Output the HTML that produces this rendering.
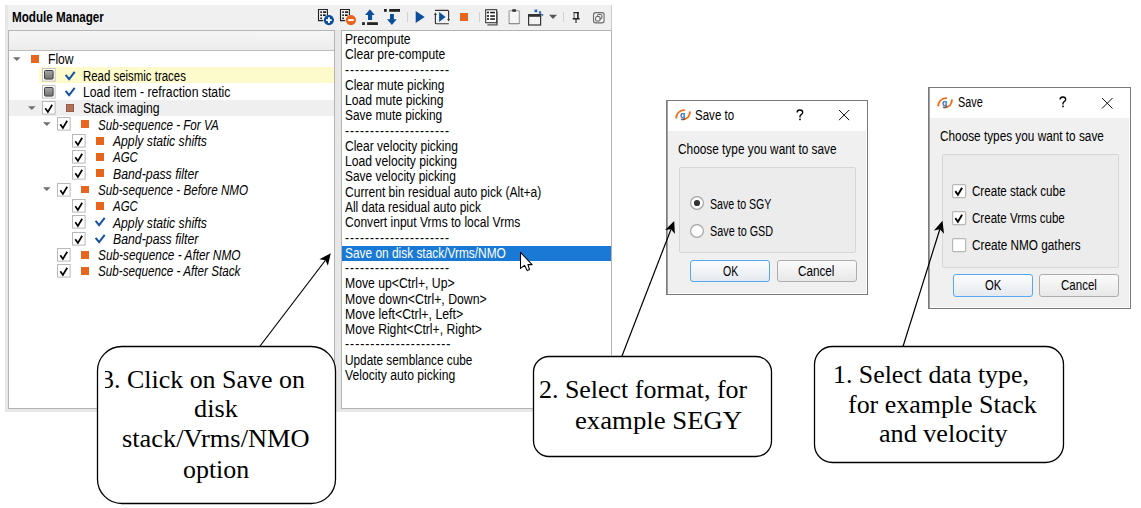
<!DOCTYPE html>
<html><head><meta charset="utf-8"><style>
html,body{margin:0;padding:0;}
body{width:1141px;height:508px;position:relative;overflow:hidden;background:#fff;font-family:'Liberation Sans', sans-serif;}
.t{position:absolute;white-space:nowrap;}
svg{overflow:visible;}
</style></head><body>
<div style="position:absolute;left:5.00px;top:5.00px;width:607.00px;height:407.00px;background:#f0f0f0;"></div>
<div style="position:absolute;left:5.00px;top:5.00px;width:3.00px;height:407.00px;background:#e7e7e7;"></div>
<div style="position:absolute;left:5.00px;top:409.00px;width:606.00px;height:3.00px;background:#e7e7e7;"></div>
<div style="position:absolute;left:335.00px;top:30.00px;width:6.00px;height:382.00px;background:#e7e7e7;"></div>
<div style="position:absolute;left:611.00px;top:5.00px;width:1.00px;height:407.00px;background:#c8c8c8;"></div>
<div class="t" style="left:11.75px;top:11px;font-size:13.8px;line-height:13.8px;color:#000;font-weight:bold;font-style:normal;font-family:'Liberation Sans', sans-serif;letter-spacing:0px;transform:scaleX(0.8441);transform-origin:0 0;">Module Manager</div>
<svg style="position:absolute;left:316.00px;top:7.00px;" width="20" height="20" viewBox="0 0 20 20"><path d="M11.4 8.2V2.5H2.5V13.6H7.2" fill="none" stroke="#222" stroke-width="1.1"/><rect x="4.3" y="4.3" width="1.6" height="1.6" fill="#111"/><rect x="7" y="4.3" width="3.1" height="1.6" fill="#111"/><rect x="4.3" y="7.4" width="1.6" height="1.6" fill="#111"/><rect x="7" y="7.4" width="2.6" height="1.6" fill="#111"/><rect x="4.3" y="10.5" width="1.6" height="1.6" fill="#111"/><circle cx="12.9" cy="13.1" r="5.1" fill="#0b4f9c"/><path d="M12.9 10.3v5.6M10.1 13.1h5.6" stroke="#fff" stroke-width="1.9"/></svg>
<svg style="position:absolute;left:338.00px;top:7.00px;" width="20" height="20" viewBox="0 0 20 20"><path d="M11.4 8.2V2.5H2.5V13.6H7.2" fill="none" stroke="#222" stroke-width="1.1"/><rect x="4.3" y="4.3" width="1.6" height="1.6" fill="#111"/><rect x="7" y="4.3" width="3.1" height="1.6" fill="#111"/><rect x="4.3" y="7.4" width="1.6" height="1.6" fill="#111"/><rect x="7" y="7.4" width="2.6" height="1.6" fill="#111"/><rect x="4.3" y="10.5" width="1.6" height="1.6" fill="#111"/><circle cx="12.9" cy="13.1" r="5.1" fill="#e8641c"/><path d="M10.1 13.1h5.6" stroke="#fff" stroke-width="1.9"/></svg>
<svg style="position:absolute;left:360.00px;top:7.00px;" width="20" height="20" viewBox="0 0 20 20"><path d="M9.9 2.2L5.1 7.9H8V12.9H12.1V7.9H14.7z" fill="#0b4f9c"/><rect x="2.1" y="15.2" width="2.8" height="2.8" fill="#222"/><rect x="7.1" y="15.2" width="10.8" height="2.8" fill="#222"/></svg>
<svg style="position:absolute;left:382.00px;top:7.00px;" width="20" height="20" viewBox="0 0 20 20"><rect x="2" y="2" width="2.8" height="2.8" fill="#222"/><rect x="7.2" y="2" width="10.8" height="2.8" fill="#222"/><path d="M9.9 18L5 12.2H8V7H11.9V12.2H14.7z" fill="#0b4f9c"/></svg>
<div style="position:absolute;left:406.50px;top:12.30px;width:1.00px;height:10.00px;background:#d0d0d0;"></div>
<svg style="position:absolute;left:414.00px;top:9.00px;" width="14" height="16" viewBox="0 0 14 16"><path d="M1.7 2v12.1l9-6.05z" fill="#0b4f9c"/></svg>
<svg style="position:absolute;left:433.00px;top:8.00px;" width="20" height="20" viewBox="0 0 20 20"><path d="M2 2.3H14.6Q15.6 2.3 15.6 3.3V11.8" fill="none" stroke="#333" stroke-width="1.15"/><path d="M14.2 11L17 11L15.6 13.6z" fill="#333"/><path d="M2.4 6.5V14.7Q2.4 15.7 3.4 15.7H15.8" fill="none" stroke="#333" stroke-width="1.15"/><path d="M1 7L3.8 7L2.4 4.3z" fill="#333"/><path d="M6.1 4.1V14L12.6 9.05z" fill="#0b4f9c"/></svg>
<div style="position:absolute;left:460.10px;top:13.20px;width:8.00px;height:8.00px;background:#e8641c;"></div>
<div style="position:absolute;left:478.50px;top:12.30px;width:1.00px;height:10.00px;background:#d0d0d0;"></div>
<svg style="position:absolute;left:484.00px;top:8.00px;" width="18" height="18" viewBox="0 0 18 18"><path d="M13 3.6V16.8H3.4" fill="none" stroke="#555" stroke-width="1.3"/><rect x="1.7" y="1.7" width="11" height="13" fill="#fff" stroke="#333" stroke-width="1.1"/><rect x="3.1" y="3.6" width="1.8" height="1.8" fill="#111"/><rect x="6.2" y="3.8" width="4.7" height="1.5" fill="#111"/><rect x="3.1" y="7.1" width="1.8" height="1.8" fill="#111"/><rect x="6.2" y="7.3" width="4.7" height="1.5" fill="#111"/><rect x="3.1" y="10.1" width="1.8" height="1.8" fill="#111"/><rect x="6.2" y="10.3" width="4.7" height="1.5" fill="#111"/></svg>
<svg style="position:absolute;left:507.00px;top:8.00px;" width="14" height="18" viewBox="0 0 14 18"><path d="M2.1 15.1V3.6Q2.1 2.6 3.1 2.6H11.4Q12.4 2.6 12.4 3.6V15.1" fill="#f5f5f5" stroke="#a8a8a8" stroke-width="1.3"/><path d="M2.1 15.1Q2.1 15.7 3 15.7H11.5Q12.4 15.7 12.4 15.1" fill="none" stroke="#707070" stroke-width="1.1"/><rect x="5.3" y="1.2" width="3.6" height="2.6" fill="#333"/></svg>
<svg style="position:absolute;left:526.00px;top:8.00px;" width="20" height="19" viewBox="0 0 20 19"><rect x="2.6" y="6.6" width="12" height="10.4" fill="#f3f3f3" stroke="#333" stroke-width="1.2"/><rect x="2" y="6" width="13.2" height="2.8" fill="#333"/><path d="M8.6 1.6l2.6 2.6M11.2 1.6l-2.6 2.6M13 3.5l2 2M15 3.5l-2 2M15.6 6l1.5 1.5" stroke="#1f5fb8" stroke-width="1.1"/><rect x="9.3" y="2.3" width="1.2" height="1.2" fill="#0b4f9c"/></svg>
<svg style="position:absolute;left:548.00px;top:13.00px;" width="10" height="7" viewBox="0 0 10 7"><path d="M1 1.8h8l-4 4.2z" fill="#555"/></svg>
<div style="position:absolute;left:562.50px;top:12.40px;width:1.00px;height:9.50px;background:#d0d0d0;"></div>
<svg style="position:absolute;left:571.00px;top:10.00px;" width="12" height="15" viewBox="0 0 12 15"><path d="M2.4 2.6H7.8" stroke="#222" stroke-width="1.2"/><path d="M3.1 2.2V8.6" stroke="#555" stroke-width="1"/><path d="M6.9 2.2V8.6" stroke="#111" stroke-width="1.5"/><path d="M1.7 8.8H8.6" stroke="#111" stroke-width="1.4"/><path d="M5 9V12.9" stroke="#333" stroke-width="1.2"/></svg>
<svg style="position:absolute;left:592.00px;top:11.00px;" width="14" height="13" viewBox="0 0 14 13"><rect x="1.5" y="1.6" width="10.6" height="10.3" rx="2.2" fill="none" stroke="#6a6a6a" stroke-width="1.1"/><rect x="5.4" y="3.5" width="4.4" height="4.4" rx="1" fill="none" stroke="#555" stroke-width="1"/><rect x="3.6" y="5.6" width="4.4" height="4.4" rx="1" fill="#f4f4f4" stroke="#555" stroke-width="1"/></svg>
<div style="position:absolute;left:8.00px;top:30.00px;width:327.00px;height:379.00px;background:#fff;border:1px solid #b4b4b4;box-sizing:border-box;"></div>
<div style="position:absolute;left:9.00px;top:31.00px;width:325.00px;height:20.00px;background:linear-gradient(#f6f6f6,#ececec);border-bottom:1px solid #bdbdbd;box-sizing:border-box;"></div>
<div style="position:absolute;left:39.00px;top:67.01px;width:295.00px;height:16.20px;background:#fdfacb;"></div>
<div style="position:absolute;left:9.00px;top:99.83px;width:325.00px;height:15.80px;background:#efefef;"></div>
<svg style="position:absolute;left:12.80px;top:56.90px;" width="8" height="5" viewBox="0 0 8 5"><path d="M0 0.2h7.6l-3.8 3.9z" fill="#6e6e6e"/></svg>
<div style="position:absolute;left:30.70px;top:55.20px;width:8.00px;height:7.80px;background:#e8651d;"></div>
<div class="t" style="left:48.40px;top:53px;font-size:13.8px;line-height:13.8px;color:#000;font-weight:normal;font-style:normal;font-family:'Liberation Sans', sans-serif;letter-spacing:0px;transform:scaleX(0.8769);transform-origin:0 0;">Flow</div>
<svg style="position:absolute;left:42.00px;top:68.41px;" width="14" height="14" viewBox="0 0 14 14"><defs><linearGradient id="gg" x1="0" y1="0" x2="0" y2="1"><stop offset="0" stop-color="#a8a8a8"/><stop offset="1" stop-color="#707070"/></linearGradient></defs><rect x="0.5" y="0.5" width="12.6" height="12.6" fill="#fff" stroke="#c4c4c4" stroke-width="1"/><rect x="2.5" y="2.5" width="8.6" height="8.6" rx="1" fill="url(#gg)" stroke="#404040" stroke-width="1"/></svg>
<svg style="position:absolute;left:64.80px;top:70.61px;" width="11" height="10" viewBox="0 0 11 10"><path d="M0.6 3.9l3.5 4.3l5.6-7.3" fill="none" stroke="#1552a3" stroke-width="2"/></svg>
<div class="t" style="left:83.40px;top:70px;font-size:13.8px;line-height:13.8px;color:#000;font-weight:normal;font-style:normal;font-family:'Liberation Sans', sans-serif;letter-spacing:0px;transform:scaleX(0.8282);transform-origin:0 0;">Read seismic traces</div>
<svg style="position:absolute;left:42.00px;top:84.72px;" width="14" height="14" viewBox="0 0 14 14"><defs><linearGradient id="gg" x1="0" y1="0" x2="0" y2="1"><stop offset="0" stop-color="#a8a8a8"/><stop offset="1" stop-color="#707070"/></linearGradient></defs><rect x="0.5" y="0.5" width="12.6" height="12.6" fill="#fff" stroke="#c4c4c4" stroke-width="1"/><rect x="2.5" y="2.5" width="8.6" height="8.6" rx="1" fill="url(#gg)" stroke="#404040" stroke-width="1"/></svg>
<svg style="position:absolute;left:64.80px;top:86.92px;" width="11" height="10" viewBox="0 0 11 10"><path d="M0.6 3.9l3.5 4.3l5.6-7.3" fill="none" stroke="#1552a3" stroke-width="2"/></svg>
<div class="t" style="left:83.40px;top:86px;font-size:13.8px;line-height:13.8px;color:#000;font-weight:normal;font-style:normal;font-family:'Liberation Sans', sans-serif;letter-spacing:0px;transform:scaleX(0.8855);transform-origin:0 0;">Load item - refraction static</div>
<svg style="position:absolute;left:27.80px;top:105.83px;" width="8" height="5" viewBox="0 0 8 5"><path d="M0 0.2h7.6l-3.8 3.9z" fill="#6e6e6e"/></svg>
<svg style="position:absolute;left:42.00px;top:101.03px;" width="14" height="14" viewBox="0 0 14 14"><rect x="0.5" y="0.5" width="12.6" height="12.6" fill="#fff" stroke="#b8b8b8" stroke-width="1"/><path d="M3.3 7.2l2.6 3.8l4.3-7.3" fill="none" stroke="#000" stroke-width="1.7" stroke-linejoin="miter"/></svg>
<div style="position:absolute;left:66.00px;top:104.03px;width:8.00px;height:7.60px;background:#b0705a;box-shadow:inset 0 0 0 0.6px #8a5040;"></div>
<div class="t" style="left:83.40px;top:102px;font-size:13.8px;line-height:13.8px;color:#000;font-weight:normal;font-style:normal;font-family:'Liberation Sans', sans-serif;letter-spacing:0px;transform:scaleX(0.8821);transform-origin:0 0;">Stack imaging</div>
<svg style="position:absolute;left:42.90px;top:122.14px;" width="8" height="5" viewBox="0 0 8 5"><path d="M0 0.2h7.6l-3.8 3.9z" fill="#6e6e6e"/></svg>
<svg style="position:absolute;left:57.10px;top:117.34px;" width="14" height="14" viewBox="0 0 14 14"><rect x="0.5" y="0.5" width="12.6" height="12.6" fill="#fff" stroke="#b8b8b8" stroke-width="1"/><path d="M3.3 7.2l2.6 3.8l4.3-7.3" fill="none" stroke="#000" stroke-width="1.7" stroke-linejoin="miter"/></svg>
<div style="position:absolute;left:81.10px;top:120.44px;width:8.00px;height:7.80px;background:#e8651d;"></div>
<div class="t" style="left:97.90px;top:119px;font-size:13.8px;line-height:13.8px;color:#000;font-weight:normal;font-style:italic;font-family:'Liberation Sans', sans-serif;letter-spacing:0px;transform:scaleX(0.8423);transform-origin:0 0;">Sub-sequence - For VA</div>
<svg style="position:absolute;left:72.20px;top:133.65px;" width="14" height="14" viewBox="0 0 14 14"><rect x="0.5" y="0.5" width="12.6" height="12.6" fill="#fff" stroke="#b8b8b8" stroke-width="1"/><path d="M3.3 7.2l2.6 3.8l4.3-7.3" fill="none" stroke="#000" stroke-width="1.7" stroke-linejoin="miter"/></svg>
<div style="position:absolute;left:96.20px;top:136.75px;width:8.00px;height:7.80px;background:#e8651d;"></div>
<div class="t" style="left:113.00px;top:135px;font-size:13.8px;line-height:13.8px;color:#000;font-weight:normal;font-style:italic;font-family:'Liberation Sans', sans-serif;letter-spacing:0px;transform:scaleX(0.8814);transform-origin:0 0;">Apply static shifts</div>
<svg style="position:absolute;left:72.20px;top:149.96px;" width="14" height="14" viewBox="0 0 14 14"><rect x="0.5" y="0.5" width="12.6" height="12.6" fill="#fff" stroke="#b8b8b8" stroke-width="1"/><path d="M3.3 7.2l2.6 3.8l4.3-7.3" fill="none" stroke="#000" stroke-width="1.7" stroke-linejoin="miter"/></svg>
<div style="position:absolute;left:96.20px;top:153.06px;width:8.00px;height:7.80px;background:#e8651d;"></div>
<div class="t" style="left:113.00px;top:151px;font-size:13.8px;line-height:13.8px;color:#000;font-weight:normal;font-style:italic;font-family:'Liberation Sans', sans-serif;letter-spacing:0px;transform:scaleX(0.8289);transform-origin:0 0;">AGC</div>
<svg style="position:absolute;left:72.20px;top:166.27px;" width="14" height="14" viewBox="0 0 14 14"><rect x="0.5" y="0.5" width="12.6" height="12.6" fill="#fff" stroke="#b8b8b8" stroke-width="1"/><path d="M3.3 7.2l2.6 3.8l4.3-7.3" fill="none" stroke="#000" stroke-width="1.7" stroke-linejoin="miter"/></svg>
<div style="position:absolute;left:96.20px;top:169.37px;width:8.00px;height:7.80px;background:#e8651d;"></div>
<div class="t" style="left:113.00px;top:168px;font-size:13.8px;line-height:13.8px;color:#000;font-weight:normal;font-style:italic;font-family:'Liberation Sans', sans-serif;letter-spacing:0px;transform:scaleX(0.8907);transform-origin:0 0;">Band-pass filter</div>
<svg style="position:absolute;left:42.90px;top:187.38px;" width="8" height="5" viewBox="0 0 8 5"><path d="M0 0.2h7.6l-3.8 3.9z" fill="#6e6e6e"/></svg>
<svg style="position:absolute;left:57.10px;top:182.58px;" width="14" height="14" viewBox="0 0 14 14"><rect x="0.5" y="0.5" width="12.6" height="12.6" fill="#fff" stroke="#b8b8b8" stroke-width="1"/><path d="M3.3 7.2l2.6 3.8l4.3-7.3" fill="none" stroke="#000" stroke-width="1.7" stroke-linejoin="miter"/></svg>
<div style="position:absolute;left:81.10px;top:185.68px;width:8.00px;height:7.80px;background:#e8651d;"></div>
<div class="t" style="left:97.90px;top:184px;font-size:13.8px;line-height:13.8px;color:#000;font-weight:normal;font-style:italic;font-family:'Liberation Sans', sans-serif;letter-spacing:0px;transform:scaleX(0.8437);transform-origin:0 0;">Sub-sequence - Before NMO</div>
<svg style="position:absolute;left:72.20px;top:198.89px;" width="14" height="14" viewBox="0 0 14 14"><rect x="0.5" y="0.5" width="12.6" height="12.6" fill="#fff" stroke="#b8b8b8" stroke-width="1"/><path d="M3.3 7.2l2.6 3.8l4.3-7.3" fill="none" stroke="#000" stroke-width="1.7" stroke-linejoin="miter"/></svg>
<div style="position:absolute;left:96.20px;top:201.99px;width:8.00px;height:7.80px;background:#e8651d;"></div>
<div class="t" style="left:113.00px;top:200px;font-size:13.8px;line-height:13.8px;color:#000;font-weight:normal;font-style:italic;font-family:'Liberation Sans', sans-serif;letter-spacing:0px;transform:scaleX(0.8289);transform-origin:0 0;">AGC</div>
<svg style="position:absolute;left:72.20px;top:215.20px;" width="14" height="14" viewBox="0 0 14 14"><rect x="0.5" y="0.5" width="12.6" height="12.6" fill="#fff" stroke="#b8b8b8" stroke-width="1"/><path d="M3.3 7.2l2.6 3.8l4.3-7.3" fill="none" stroke="#000" stroke-width="1.7" stroke-linejoin="miter"/></svg>
<svg style="position:absolute;left:95.00px;top:217.40px;" width="11" height="10" viewBox="0 0 11 10"><path d="M0.6 3.9l3.5 4.3l5.6-7.3" fill="none" stroke="#1552a3" stroke-width="2"/></svg>
<div class="t" style="left:113.00px;top:217px;font-size:13.8px;line-height:13.8px;color:#000;font-weight:normal;font-style:italic;font-family:'Liberation Sans', sans-serif;letter-spacing:0px;transform:scaleX(0.8814);transform-origin:0 0;">Apply static shifts</div>
<svg style="position:absolute;left:72.20px;top:231.51px;" width="14" height="14" viewBox="0 0 14 14"><rect x="0.5" y="0.5" width="12.6" height="12.6" fill="#fff" stroke="#b8b8b8" stroke-width="1"/><path d="M3.3 7.2l2.6 3.8l4.3-7.3" fill="none" stroke="#000" stroke-width="1.7" stroke-linejoin="miter"/></svg>
<svg style="position:absolute;left:95.00px;top:233.71px;" width="11" height="10" viewBox="0 0 11 10"><path d="M0.6 3.9l3.5 4.3l5.6-7.3" fill="none" stroke="#1552a3" stroke-width="2"/></svg>
<div class="t" style="left:113.00px;top:233px;font-size:13.8px;line-height:13.8px;color:#000;font-weight:normal;font-style:italic;font-family:'Liberation Sans', sans-serif;letter-spacing:0px;transform:scaleX(0.8907);transform-origin:0 0;">Band-pass filter</div>
<svg style="position:absolute;left:57.10px;top:247.82px;" width="14" height="14" viewBox="0 0 14 14"><rect x="0.5" y="0.5" width="12.6" height="12.6" fill="#fff" stroke="#b8b8b8" stroke-width="1"/><path d="M3.3 7.2l2.6 3.8l4.3-7.3" fill="none" stroke="#000" stroke-width="1.7" stroke-linejoin="miter"/></svg>
<div style="position:absolute;left:81.10px;top:250.92px;width:8.00px;height:7.80px;background:#e8651d;"></div>
<div class="t" style="left:97.90px;top:249px;font-size:13.8px;line-height:13.8px;color:#000;font-weight:normal;font-style:italic;font-family:'Liberation Sans', sans-serif;letter-spacing:0px;transform:scaleX(0.8589);transform-origin:0 0;">Sub-sequence - After NMO</div>
<svg style="position:absolute;left:57.10px;top:264.13px;" width="14" height="14" viewBox="0 0 14 14"><rect x="0.5" y="0.5" width="12.6" height="12.6" fill="#fff" stroke="#b8b8b8" stroke-width="1"/><path d="M3.3 7.2l2.6 3.8l4.3-7.3" fill="none" stroke="#000" stroke-width="1.7" stroke-linejoin="miter"/></svg>
<div style="position:absolute;left:81.10px;top:267.23px;width:8.00px;height:7.80px;background:#e8651d;"></div>
<div class="t" style="left:97.90px;top:265px;font-size:13.8px;line-height:13.8px;color:#000;font-weight:normal;font-style:italic;font-family:'Liberation Sans', sans-serif;letter-spacing:0px;transform:scaleX(0.8469);transform-origin:0 0;">Sub-sequence - After Stack</div>
<div style="position:absolute;left:341.00px;top:30.00px;width:271.00px;height:379.00px;background:#fff;border:1px solid #b4b4b4;box-sizing:border-box;"></div>
<div class="t" style="left:345.00px;top:33px;font-size:13.8px;line-height:13.8px;color:#000;font-weight:normal;font-style:normal;font-family:'Liberation Sans', sans-serif;letter-spacing:0px;transform:scaleX(0.8818);transform-origin:0 0;">Precompute</div>
<div class="t" style="left:345.00px;top:48px;font-size:13.8px;line-height:13.8px;color:#000;font-weight:normal;font-style:normal;font-family:'Liberation Sans', sans-serif;letter-spacing:0px;transform:scaleX(0.8773);transform-origin:0 0;">Clear pre-compute</div>
<div class="t" style="left:345.00px;top:64px;font-size:13.8px;line-height:13.8px;color:#000;font-weight:normal;font-style:normal;font-family:'Liberation Sans', sans-serif;letter-spacing:1.15px;transform:scaleX(0.8695);transform-origin:0 0;">---------------------</div>
<div class="t" style="left:345.00px;top:79px;font-size:13.8px;line-height:13.8px;color:#000;font-weight:normal;font-style:normal;font-family:'Liberation Sans', sans-serif;letter-spacing:0px;transform:scaleX(0.8706);transform-origin:0 0;">Clear mute picking</div>
<div class="t" style="left:345.00px;top:94px;font-size:13.8px;line-height:13.8px;color:#000;font-weight:normal;font-style:normal;font-family:'Liberation Sans', sans-serif;letter-spacing:0px;transform:scaleX(0.8801);transform-origin:0 0;">Load mute picking</div>
<div class="t" style="left:345.00px;top:109px;font-size:13.8px;line-height:13.8px;color:#000;font-weight:normal;font-style:normal;font-family:'Liberation Sans', sans-serif;letter-spacing:0px;transform:scaleX(0.8619);transform-origin:0 0;">Save mute picking</div>
<div class="t" style="left:345.00px;top:125px;font-size:13.8px;line-height:13.8px;color:#000;font-weight:normal;font-style:normal;font-family:'Liberation Sans', sans-serif;letter-spacing:1.15px;transform:scaleX(0.8695);transform-origin:0 0;">---------------------</div>
<div class="t" style="left:345.00px;top:140px;font-size:13.8px;line-height:13.8px;color:#000;font-weight:normal;font-style:normal;font-family:'Liberation Sans', sans-serif;letter-spacing:0px;transform:scaleX(0.8712);transform-origin:0 0;">Clear velocity picking</div>
<div class="t" style="left:345.00px;top:155px;font-size:13.8px;line-height:13.8px;color:#000;font-weight:normal;font-style:normal;font-family:'Liberation Sans', sans-serif;letter-spacing:0px;transform:scaleX(0.8795);transform-origin:0 0;">Load velocity picking</div>
<div class="t" style="left:345.00px;top:170px;font-size:13.8px;line-height:13.8px;color:#000;font-weight:normal;font-style:normal;font-family:'Liberation Sans', sans-serif;letter-spacing:0px;transform:scaleX(0.8650);transform-origin:0 0;">Save velocity picking</div>
<div class="t" style="left:345.00px;top:186px;font-size:13.8px;line-height:13.8px;color:#000;font-weight:normal;font-style:normal;font-family:'Liberation Sans', sans-serif;letter-spacing:0px;transform:scaleX(0.8752);transform-origin:0 0;">Current bin residual auto pick (Alt+a)</div>
<div class="t" style="left:345.00px;top:201px;font-size:13.8px;line-height:13.8px;color:#000;font-weight:normal;font-style:normal;font-family:'Liberation Sans', sans-serif;letter-spacing:0px;transform:scaleX(0.8646);transform-origin:0 0;">All data residual auto pick</div>
<div class="t" style="left:345.00px;top:216px;font-size:13.8px;line-height:13.8px;color:#000;font-weight:normal;font-style:normal;font-family:'Liberation Sans', sans-serif;letter-spacing:0px;transform:scaleX(0.8733);transform-origin:0 0;">Convert input Vrms to local Vrms</div>
<div class="t" style="left:345.00px;top:232px;font-size:13.8px;line-height:13.8px;color:#000;font-weight:normal;font-style:normal;font-family:'Liberation Sans', sans-serif;letter-spacing:1.15px;transform:scaleX(0.8695);transform-origin:0 0;">---------------------</div>
<div style="position:absolute;left:342.00px;top:245.98px;width:269.00px;height:15.20px;background:#1a79d5;"></div>
<div class="t" style="left:345.00px;top:247px;font-size:13.8px;line-height:13.8px;color:#fff;font-weight:normal;font-style:normal;font-family:'Liberation Sans', sans-serif;letter-spacing:0px;transform:scaleX(0.8622);transform-origin:0 0;">Save on disk stack/Vrms/NMO</div>
<div class="t" style="left:345.00px;top:262px;font-size:13.8px;line-height:13.8px;color:#000;font-weight:normal;font-style:normal;font-family:'Liberation Sans', sans-serif;letter-spacing:1.15px;transform:scaleX(0.8695);transform-origin:0 0;">---------------------</div>
<div class="t" style="left:345.00px;top:277px;font-size:13.8px;line-height:13.8px;color:#000;font-weight:normal;font-style:normal;font-family:'Liberation Sans', sans-serif;letter-spacing:0px;transform:scaleX(0.8849);transform-origin:0 0;">Move up&lt;Ctrl+, Up&gt;</div>
<div class="t" style="left:345.00px;top:293px;font-size:13.8px;line-height:13.8px;color:#000;font-weight:normal;font-style:normal;font-family:'Liberation Sans', sans-serif;letter-spacing:0px;transform:scaleX(0.8908);transform-origin:0 0;">Move down&lt;Ctrl+, Down&gt;</div>
<div class="t" style="left:345.00px;top:308px;font-size:13.8px;line-height:13.8px;color:#000;font-weight:normal;font-style:normal;font-family:'Liberation Sans', sans-serif;letter-spacing:0px;transform:scaleX(0.8933);transform-origin:0 0;">Move left&lt;Ctrl+, Left&gt;</div>
<div class="t" style="left:345.00px;top:323px;font-size:13.8px;line-height:13.8px;color:#000;font-weight:normal;font-style:normal;font-family:'Liberation Sans', sans-serif;letter-spacing:0px;transform:scaleX(0.8817);transform-origin:0 0;">Move Right&lt;Ctrl+, Right&gt;</div>
<div class="t" style="left:345.00px;top:338px;font-size:13.8px;line-height:13.8px;color:#000;font-weight:normal;font-style:normal;font-family:'Liberation Sans', sans-serif;letter-spacing:1.15px;transform:scaleX(0.8813);transform-origin:0 0;">---------------------</div>
<div class="t" style="left:345.00px;top:354px;font-size:13.8px;line-height:13.8px;color:#000;font-weight:normal;font-style:normal;font-family:'Liberation Sans', sans-serif;letter-spacing:0px;transform:scaleX(0.8560);transform-origin:0 0;">Update semblance cube</div>
<div class="t" style="left:345.00px;top:369px;font-size:13.8px;line-height:13.8px;color:#000;font-weight:normal;font-style:normal;font-family:'Liberation Sans', sans-serif;letter-spacing:0px;transform:scaleX(0.8813);transform-origin:0 0;">Velocity auto picking</div>
<svg style="position:absolute;left:519.00px;top:251.00px;" width="15" height="22" viewBox="0 0 15 22"><path d="M1.5 1.4V17.4L5.5 14.3L8.2 19.6L10.5 18.5L8.9 13.6H13.1z" fill="#fff" stroke="#000" stroke-width="1.05" stroke-linejoin="round"/></svg>
<div style="position:absolute;left:666.00px;top:100.00px;width:202.00px;height:195.00px;background:#7a7a7a;"></div>
<div style="position:absolute;left:667.00px;top:101.00px;width:200.00px;height:193.00px;background:#fff;"></div>
<div style="position:absolute;left:668.00px;top:131.00px;width:198.00px;height:162.00px;background:#f0f0f0;"></div>
<div style="position:absolute;left:667.00px;top:101.00px;width:1.00px;height:193.00px;background:#a0a0a0;"></div>
<svg style="position:absolute;left:672.00px;top:106.00px;" width="22" height="16" viewBox="0 0 22 16"><path d="M4.2 11.6C4.6 8 7.3 4.3 12.2 4.1" fill="none" stroke="#f46a10" stroke-width="1.9" stroke-linecap="round"/><path d="M17.9 6.3C17.7 10 15.1 13.4 10.2 13.5" fill="none" stroke="#f46a10" stroke-width="1.9" stroke-linecap="round"/><text x="10.7" y="11.6" font-family="Liberation Sans" font-weight="bold" font-size="8.6" fill="#1f6db5" text-anchor="middle">g</text></svg>
<div class="t" style="left:695.30px;top:109px;font-size:13.8px;line-height:13.8px;color:#000;font-weight:normal;font-style:normal;font-family:'Liberation Sans', sans-serif;letter-spacing:0px;transform:scaleX(0.8362);transform-origin:0 0;">Save to</div>
<svg style="position:absolute;left:795.00px;top:109.00px;" width="10" height="13" viewBox="0 0 10 13"><path d="M2.1 3.6C2.1 1.9 3.3 1 4.9 1C6.6 1 7.7 2 7.7 3.4C7.7 5.1 5.4 5.6 5 7.2L5 8.4" fill="none" stroke="#000" stroke-width="1.35"/><rect x="4.2" y="9.6" width="1.6" height="1.6" fill="#000"/></svg>
<svg style="position:absolute;left:838.20px;top:109.20px;" width="12.2" height="12.2" viewBox="0 0 12.2 12.2"><path d="M1 1L11.2 11.2M11.2 1L1 11.2" stroke="#111" stroke-width="1"/></svg>
<div class="t" style="left:677.60px;top:143px;font-size:13.8px;line-height:13.8px;color:#000;font-weight:normal;font-style:normal;font-family:'Liberation Sans', sans-serif;letter-spacing:0px;transform:scaleX(0.8579);transform-origin:0 0;">Choose type you want to save</div>
<div style="position:absolute;left:679.00px;top:167.00px;width:177.00px;height:86.00px;background:#ececec;border:1px solid #d6d6d6;border-radius:2px;box-sizing:border-box;"></div>
<svg style="position:absolute;left:688.80px;top:195.40px;" width="16" height="16" viewBox="0 0 16 16"><circle cx="8" cy="8" r="6.4" fill="#fff" stroke="#a4a4a4" stroke-width="1.2"/><circle cx="8" cy="8" r="3.1" fill="#333"/></svg>
<svg style="position:absolute;left:688.80px;top:222.50px;" width="16" height="16" viewBox="0 0 16 16"><circle cx="8" cy="8" r="6.4" fill="#fff" stroke="#a4a4a4" stroke-width="1.2"/></svg>
<div class="t" style="left:709.50px;top:198px;font-size:13.8px;line-height:13.8px;color:#000;font-weight:normal;font-style:normal;font-family:'Liberation Sans', sans-serif;letter-spacing:0px;transform:scaleX(0.7703);transform-origin:0 0;">Save to SGY</div>
<div class="t" style="left:709.50px;top:225px;font-size:13.8px;line-height:13.8px;color:#000;font-weight:normal;font-style:normal;font-family:'Liberation Sans', sans-serif;letter-spacing:0px;transform:scaleX(0.7841);transform-origin:0 0;">Save to GSD</div>
<div style="position:absolute;left:690.00px;top:260.00px;width:80.00px;height:22.00px;background:linear-gradient(#fdfdfe,#e4e9ef);border:1px solid #55a8f2;border-radius:3px;box-sizing:border-box;"></div>
<div class="t" style="left:722.70px;top:265px;font-size:13.8px;line-height:13.8px;color:#000;font-weight:normal;font-style:normal;font-family:'Liberation Sans', sans-serif;letter-spacing:0px;transform:scaleX(0.7625);transform-origin:0 0;">OK</div>
<div style="position:absolute;left:777.00px;top:260.00px;width:80.00px;height:22.00px;background:linear-gradient(#fbfbfb,#e8e8e8);border:1px solid #acacac;border-radius:3px;box-sizing:border-box;"></div>
<div class="t" style="left:798.40px;top:265px;font-size:13.8px;line-height:13.8px;color:#000;font-weight:normal;font-style:normal;font-family:'Liberation Sans', sans-serif;letter-spacing:0px;transform:scaleX(0.8493);transform-origin:0 0;">Cancel</div>
<div style="position:absolute;left:928.00px;top:87.00px;width:203.00px;height:222.00px;background:#7a7a7a;"></div>
<div style="position:absolute;left:929.00px;top:88.00px;width:201.00px;height:220.00px;background:#fff;"></div>
<div style="position:absolute;left:930.00px;top:118.00px;width:199.00px;height:189.00px;background:#f0f0f0;"></div>
<div style="position:absolute;left:929.00px;top:88.00px;width:1.00px;height:220.00px;background:#a0a0a0;"></div>
<svg style="position:absolute;left:934.40px;top:93.50px;" width="22" height="16" viewBox="0 0 22 16"><path d="M4.2 11.6C4.6 8 7.3 4.3 12.2 4.1" fill="none" stroke="#f46a10" stroke-width="1.9" stroke-linecap="round"/><path d="M17.9 6.3C17.7 10 15.1 13.4 10.2 13.5" fill="none" stroke="#f46a10" stroke-width="1.9" stroke-linecap="round"/><text x="10.7" y="11.6" font-family="Liberation Sans" font-weight="bold" font-size="8.6" fill="#1f6db5" text-anchor="middle">g</text></svg>
<div class="t" style="left:958.00px;top:96px;font-size:13.8px;line-height:13.8px;color:#000;font-weight:normal;font-style:normal;font-family:'Liberation Sans', sans-serif;letter-spacing:0px;transform:scaleX(0.7843);transform-origin:0 0;">Save</div>
<svg style="position:absolute;left:1057.50px;top:96.30px;" width="10" height="13" viewBox="0 0 10 13"><path d="M2.1 3.6C2.1 1.9 3.3 1 4.9 1C6.6 1 7.7 2 7.7 3.4C7.7 5.1 5.4 5.6 5 7.2L5 8.4" fill="none" stroke="#000" stroke-width="1.35"/><rect x="4.2" y="9.6" width="1.6" height="1.6" fill="#000"/></svg>
<svg style="position:absolute;left:1100.90px;top:96.60px;" width="12.5" height="12.5" viewBox="0 0 12.5 12.5"><path d="M1 1L11.5 11.5M11.5 1L1 11.5" stroke="#111" stroke-width="1"/></svg>
<div class="t" style="left:940.30px;top:130px;font-size:13.8px;line-height:13.8px;color:#000;font-weight:normal;font-style:normal;font-family:'Liberation Sans', sans-serif;letter-spacing:0px;transform:scaleX(0.8546);transform-origin:0 0;">Choose types you want to save</div>
<div style="position:absolute;left:942.00px;top:154.00px;width:177.00px;height:114.00px;background:#ececec;border:1px solid #d6d6d6;border-radius:2px;box-sizing:border-box;"></div>
<svg style="position:absolute;left:952.20px;top:184.30px;" width="14" height="14" viewBox="0 0 14 14"><rect x="0.6" y="0.6" width="13" height="13" rx="1" fill="#fff" stroke="#b8b8b8" stroke-width="1.2"/><path d="M3.3 7.1l2.6 3.6l4.2-7" fill="none" stroke="#000" stroke-width="1.9"/></svg>
<div class="t" style="left:972.00px;top:185px;font-size:13.8px;line-height:13.8px;color:#000;font-weight:normal;font-style:normal;font-family:'Liberation Sans', sans-serif;letter-spacing:0px;transform:scaleX(0.8402);transform-origin:0 0;">Create stack cube</div>
<svg style="position:absolute;left:952.20px;top:211.30px;" width="14" height="14" viewBox="0 0 14 14"><rect x="0.6" y="0.6" width="13" height="13" rx="1" fill="#fff" stroke="#b8b8b8" stroke-width="1.2"/><path d="M3.3 7.1l2.6 3.6l4.2-7" fill="none" stroke="#000" stroke-width="1.9"/></svg>
<div class="t" style="left:972.00px;top:212px;font-size:13.8px;line-height:13.8px;color:#000;font-weight:normal;font-style:normal;font-family:'Liberation Sans', sans-serif;letter-spacing:0px;transform:scaleX(0.8385);transform-origin:0 0;">Create Vrms cube</div>
<svg style="position:absolute;left:952.20px;top:238.30px;" width="14" height="14" viewBox="0 0 14 14"><rect x="0.6" y="0.6" width="13" height="13" rx="1" fill="#fff" stroke="#b8b8b8" stroke-width="1.2"/></svg>
<div class="t" style="left:972.00px;top:239px;font-size:13.8px;line-height:13.8px;color:#000;font-weight:normal;font-style:normal;font-family:'Liberation Sans', sans-serif;letter-spacing:0px;transform:scaleX(0.8525);transform-origin:0 0;">Create NMO gathers</div>
<div style="position:absolute;left:953.00px;top:274.00px;width:80.00px;height:23.00px;background:linear-gradient(#fdfdfe,#e4e9ef);border:1px solid #55a8f2;border-radius:3px;box-sizing:border-box;"></div>
<div class="t" style="left:985.00px;top:279px;font-size:13.8px;line-height:13.8px;color:#000;font-weight:normal;font-style:normal;font-family:'Liberation Sans', sans-serif;letter-spacing:0px;transform:scaleX(0.8224);transform-origin:0 0;">OK</div>
<div style="position:absolute;left:1039.00px;top:274.00px;width:80.00px;height:23.00px;background:linear-gradient(#fbfbfb,#e8e8e8);border:1px solid #acacac;border-radius:3px;box-sizing:border-box;"></div>
<div class="t" style="left:1061.00px;top:279px;font-size:13.8px;line-height:13.8px;color:#000;font-weight:normal;font-style:normal;font-family:'Liberation Sans', sans-serif;letter-spacing:0px;transform:scaleX(0.8356);transform-origin:0 0;">Cancel</div>
<svg style="position:absolute;left:0.00px;top:0.00px;pointer-events:none;" width="1141" height="508" viewBox="0 0 1141 508"><path d="M259.70 346.50L325.44 260.24" stroke="#000" stroke-width="1.2"/><path d="M330.80 253.20L327.86 265.80L325.44 260.24L319.43 259.37z" fill="#000"/><path d="M621.80 356.50L671.01 229.25" stroke="#000" stroke-width="1.2"/><path d="M674.20 221.00L674.89 233.92L671.01 229.25L665.00 230.09z" fill="#000"/><path d="M903.00 346.50L939.85 229.24" stroke="#000" stroke-width="1.2"/><path d="M942.50 220.80L944.02 233.65L939.85 229.24L933.91 230.47z" fill="#000"/></svg>
<svg style="position:absolute;left:95px;top:344px" width="242" height="161"><rect x="2.5" y="2.5" width="238" height="157" rx="24.3" ry="24.3" fill="#fff" stroke="#000" stroke-width="1.3"/></svg>
<div style="position:absolute;left:104.7px;top:350px;width:230px;height:150px;overflow:hidden">
<div class="t" style="left:-3.70px;top:17px;font-size:25.7px;line-height:25.7px;color:#000;font-weight:normal;font-style:normal;font-family:'Liberation Serif', serif;letter-spacing:0px;transform:scaleX(1.0100);transform-origin:0 0;">3. Click on Save on</div>
<div class="t" style="left:89.60px;top:46px;font-size:25.7px;line-height:25.7px;color:#000;font-weight:normal;font-style:normal;font-family:'Liberation Serif', serif;letter-spacing:0px;transform:scaleX(1.0237);transform-origin:0 0;">disk</div>
<div class="t" style="left:17.70px;top:76px;font-size:25.7px;line-height:25.7px;color:#000;font-weight:normal;font-style:normal;font-family:'Liberation Serif', serif;letter-spacing:0px;transform:scaleX(1.0276);transform-origin:0 0;">stack/Vrms/NMO</div>
<div class="t" style="left:78.50px;top:107px;font-size:25.7px;line-height:25.7px;color:#000;font-weight:normal;font-style:normal;font-family:'Liberation Serif', serif;letter-spacing:0px;transform:scaleX(1.0078);transform-origin:0 0;">option</div>
</div>
<svg style="position:absolute;left:531px;top:354px" width="242" height="104"><rect x="2.5" y="2.5" width="238" height="100" rx="15.5" ry="15.5" fill="#fff" stroke="#000" stroke-width="1.3"/></svg>
<div class="t" style="left:539.00px;top:377px;font-size:25.7px;line-height:25.7px;color:#000;font-weight:normal;font-style:normal;font-family:'Liberation Serif', serif;letter-spacing:0px;transform:scaleX(1.0097);transform-origin:0 0;">2. Select format, for</div>
<div class="t" style="left:575.30px;top:408px;font-size:25.7px;line-height:25.7px;color:#000;font-weight:normal;font-style:normal;font-family:'Liberation Serif', serif;letter-spacing:0px;transform:scaleX(1.0414);transform-origin:0 0;">example SEGY</div>
<svg style="position:absolute;left:812px;top:344px" width="253" height="120"><rect x="2.5" y="2.5" width="249" height="116" rx="18.0" ry="18.0" fill="#fff" stroke="#000" stroke-width="1.3"/></svg>
<div class="t" style="left:832.60px;top:362px;font-size:25.7px;line-height:25.7px;color:#000;font-weight:normal;font-style:normal;font-family:'Liberation Serif', serif;letter-spacing:0px;transform:scaleX(1.0057);transform-origin:0 0;">1. Select data type,</div>
<div class="t" style="left:848.00px;top:392px;font-size:25.7px;line-height:25.7px;color:#000;font-weight:normal;font-style:normal;font-family:'Liberation Serif', serif;letter-spacing:0px;transform:scaleX(1.0097);transform-origin:0 0;">for example Stack</div>
<div class="t" style="left:878.80px;top:421px;font-size:25.7px;line-height:25.7px;color:#000;font-weight:normal;font-style:normal;font-family:'Liberation Serif', serif;letter-spacing:0px;transform:scaleX(1.0176);transform-origin:0 0;">and velocity</div>
</body></html>
